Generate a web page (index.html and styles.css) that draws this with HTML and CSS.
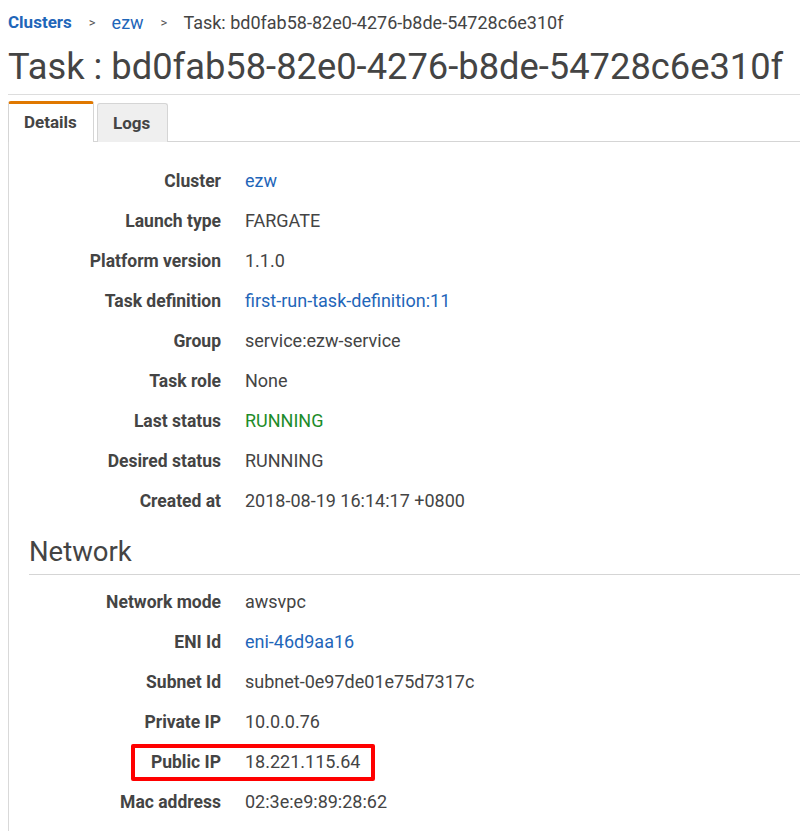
FILE: index.html
```html
<!DOCTYPE html>
<html>
<head>
<meta charset="utf-8">
<link rel="stylesheet" href="styles.css">
</head>
<body>
<div class="page">
  <nav class="crumbs">
    <a class="crumb-root" href="#">Clusters</a>
    <span class="sep">&gt;</span>
    <a class="crumb-link" href="#">ezw</a>
    <span class="sep">&gt;</span>
    <span class="crumb-current">Task: bd0fab58-82e0-4276-b8de-54728c6e310f</span>
  </nav>
  <h1 class="title">Task : bd0fab58-82e0-4276-b8de-54728c6e310f</h1>
  <div class="tabs">
    <div class="tab active">Details</div>
    <div class="tab">Logs</div>
  </div>
  <div class="panel">
    <dl class="details">
      <dt>Cluster</dt><dd><a href="#">ezw</a></dd>
      <dt>Launch type</dt><dd>FARGATE</dd>
      <dt>Platform version</dt><dd>1.1.0</dd>
      <dt>Task definition</dt><dd><a href="#">first-run-task-definition:11</a></dd>
      <dt>Group</dt><dd>service:ezw-service</dd>
      <dt>Task role</dt><dd>None</dd>
      <dt>Last status</dt><dd class="ok">RUNNING</dd>
      <dt>Desired status</dt><dd>RUNNING</dd>
      <dt>Created at</dt><dd>2018-08-19 16:14:17 +0800</dd>
    </dl>
    <h2 class="section">Network</h2>
    <dl class="details net">
      <dt>Network mode</dt><dd>awsvpc</dd>
      <dt>ENI Id</dt><dd><a href="#">eni-46d9aa16</a></dd>
      <dt>Subnet Id</dt><dd>subnet-0e97de01e75d7317c</dd>
      <dt>Private IP</dt><dd>10.0.0.76</dd>
      <dt class="marked">Public IP</dt><dd>18.221.115.64</dd>
      <dt>Mac address</dt><dd>02:3e:e9:89:28:62</dd>
    </dl>
  </div>
</div>
</body>
</html>
```
FILE: styles.css
```css
html, body {
  margin: 0;
  padding: 0;
  background: #ffffff;
  overflow: hidden;
}
body {
  font-family: Roboto, "Liberation Sans", sans-serif;
  color: #444444;
  font-size: 18px;
}
a {
  color: #1f66b9;
  text-decoration: none;
}
.page {
  margin-left: 8px;
}
.crumbs {
  display: flex;
  align-items: center;
  height: 22px;
  padding-top: 11px;
  font-size: 18px;
  white-space: nowrap;
}
.crumb-root {
  font-weight: 700;
  font-size: 17px;
  color: #1f66b9;
}
.sep {
  color: #555;
  margin: 0 16px 0 17px;
  font-size: 13px;
}
.crumb-link { color: #1f66b9; }
.crumb-current { color: #444; }
.title {
  margin: 0;
  font-weight: 400;
  font-size: 36.3px;
  line-height: 44px;
  color: #444;
  padding-top: 12px;
  padding-bottom: 5px;
  border-bottom: 1px solid #dddddd;
  white-space: nowrap;
}
.tabs {
  display: flex;
  align-items: flex-end;
  margin-top: 6px;
  border-bottom: 1px solid #d5d5d5;
  gap: 3px;
}
.tab {
  font-weight: 700;
  font-size: 17px;
  color: #444;
  height: 39px;
  line-height: 39px;
  box-sizing: border-box;
  border: 1px solid #d5d5d5;
  border-bottom: none;
  border-radius: 3px 3px 0 0;
  background: #efefef;
  margin-bottom: -1px;
}
.tab.active {
  background: #ffffff;
  border-top: 3px solid #e07800;
  height: 41px;
  line-height: 36px;
  width: 86px;
  padding-left: 15px;
}
.tab:not(.active) {
  width: 71px;
  padding-left: 15px;
}
.panel {
  border-left: 1px solid #d9d9d9;
  padding-top: 19px;
  padding-bottom: 40px;
}
.details {
  display: grid;
  grid-template-columns: 212px auto;
  column-gap: 24px;
  margin: 0;
}
.details dt {
  text-align: right;
  font-weight: 700;
  font-size: 17.5px;
  color: #444;
  line-height: 40px;
}
.details dd {
  margin: 0;
  line-height: 40px;
  color: #444;
}
.details dd.ok {
  color: #1d8c2a;
}
.section {
  margin: 14px 0 0 20px;
  font-weight: 400;
  font-size: 27.5px;
  line-height: 34px;
  color: #444;
  padding-bottom: 5px;
  border-bottom: 1px solid #d5d5d5;
}
.net {
  margin-top: 7px;
}
.net dt.marked {
  position: relative;
}
.net dt.marked::before {
  content: "";
  position: absolute;
  left: 122px;
  top: 2px;
  width: 236px;
  height: 29px;
  border: 4px solid #ff0000;
  border-radius: 2px;
}
```
